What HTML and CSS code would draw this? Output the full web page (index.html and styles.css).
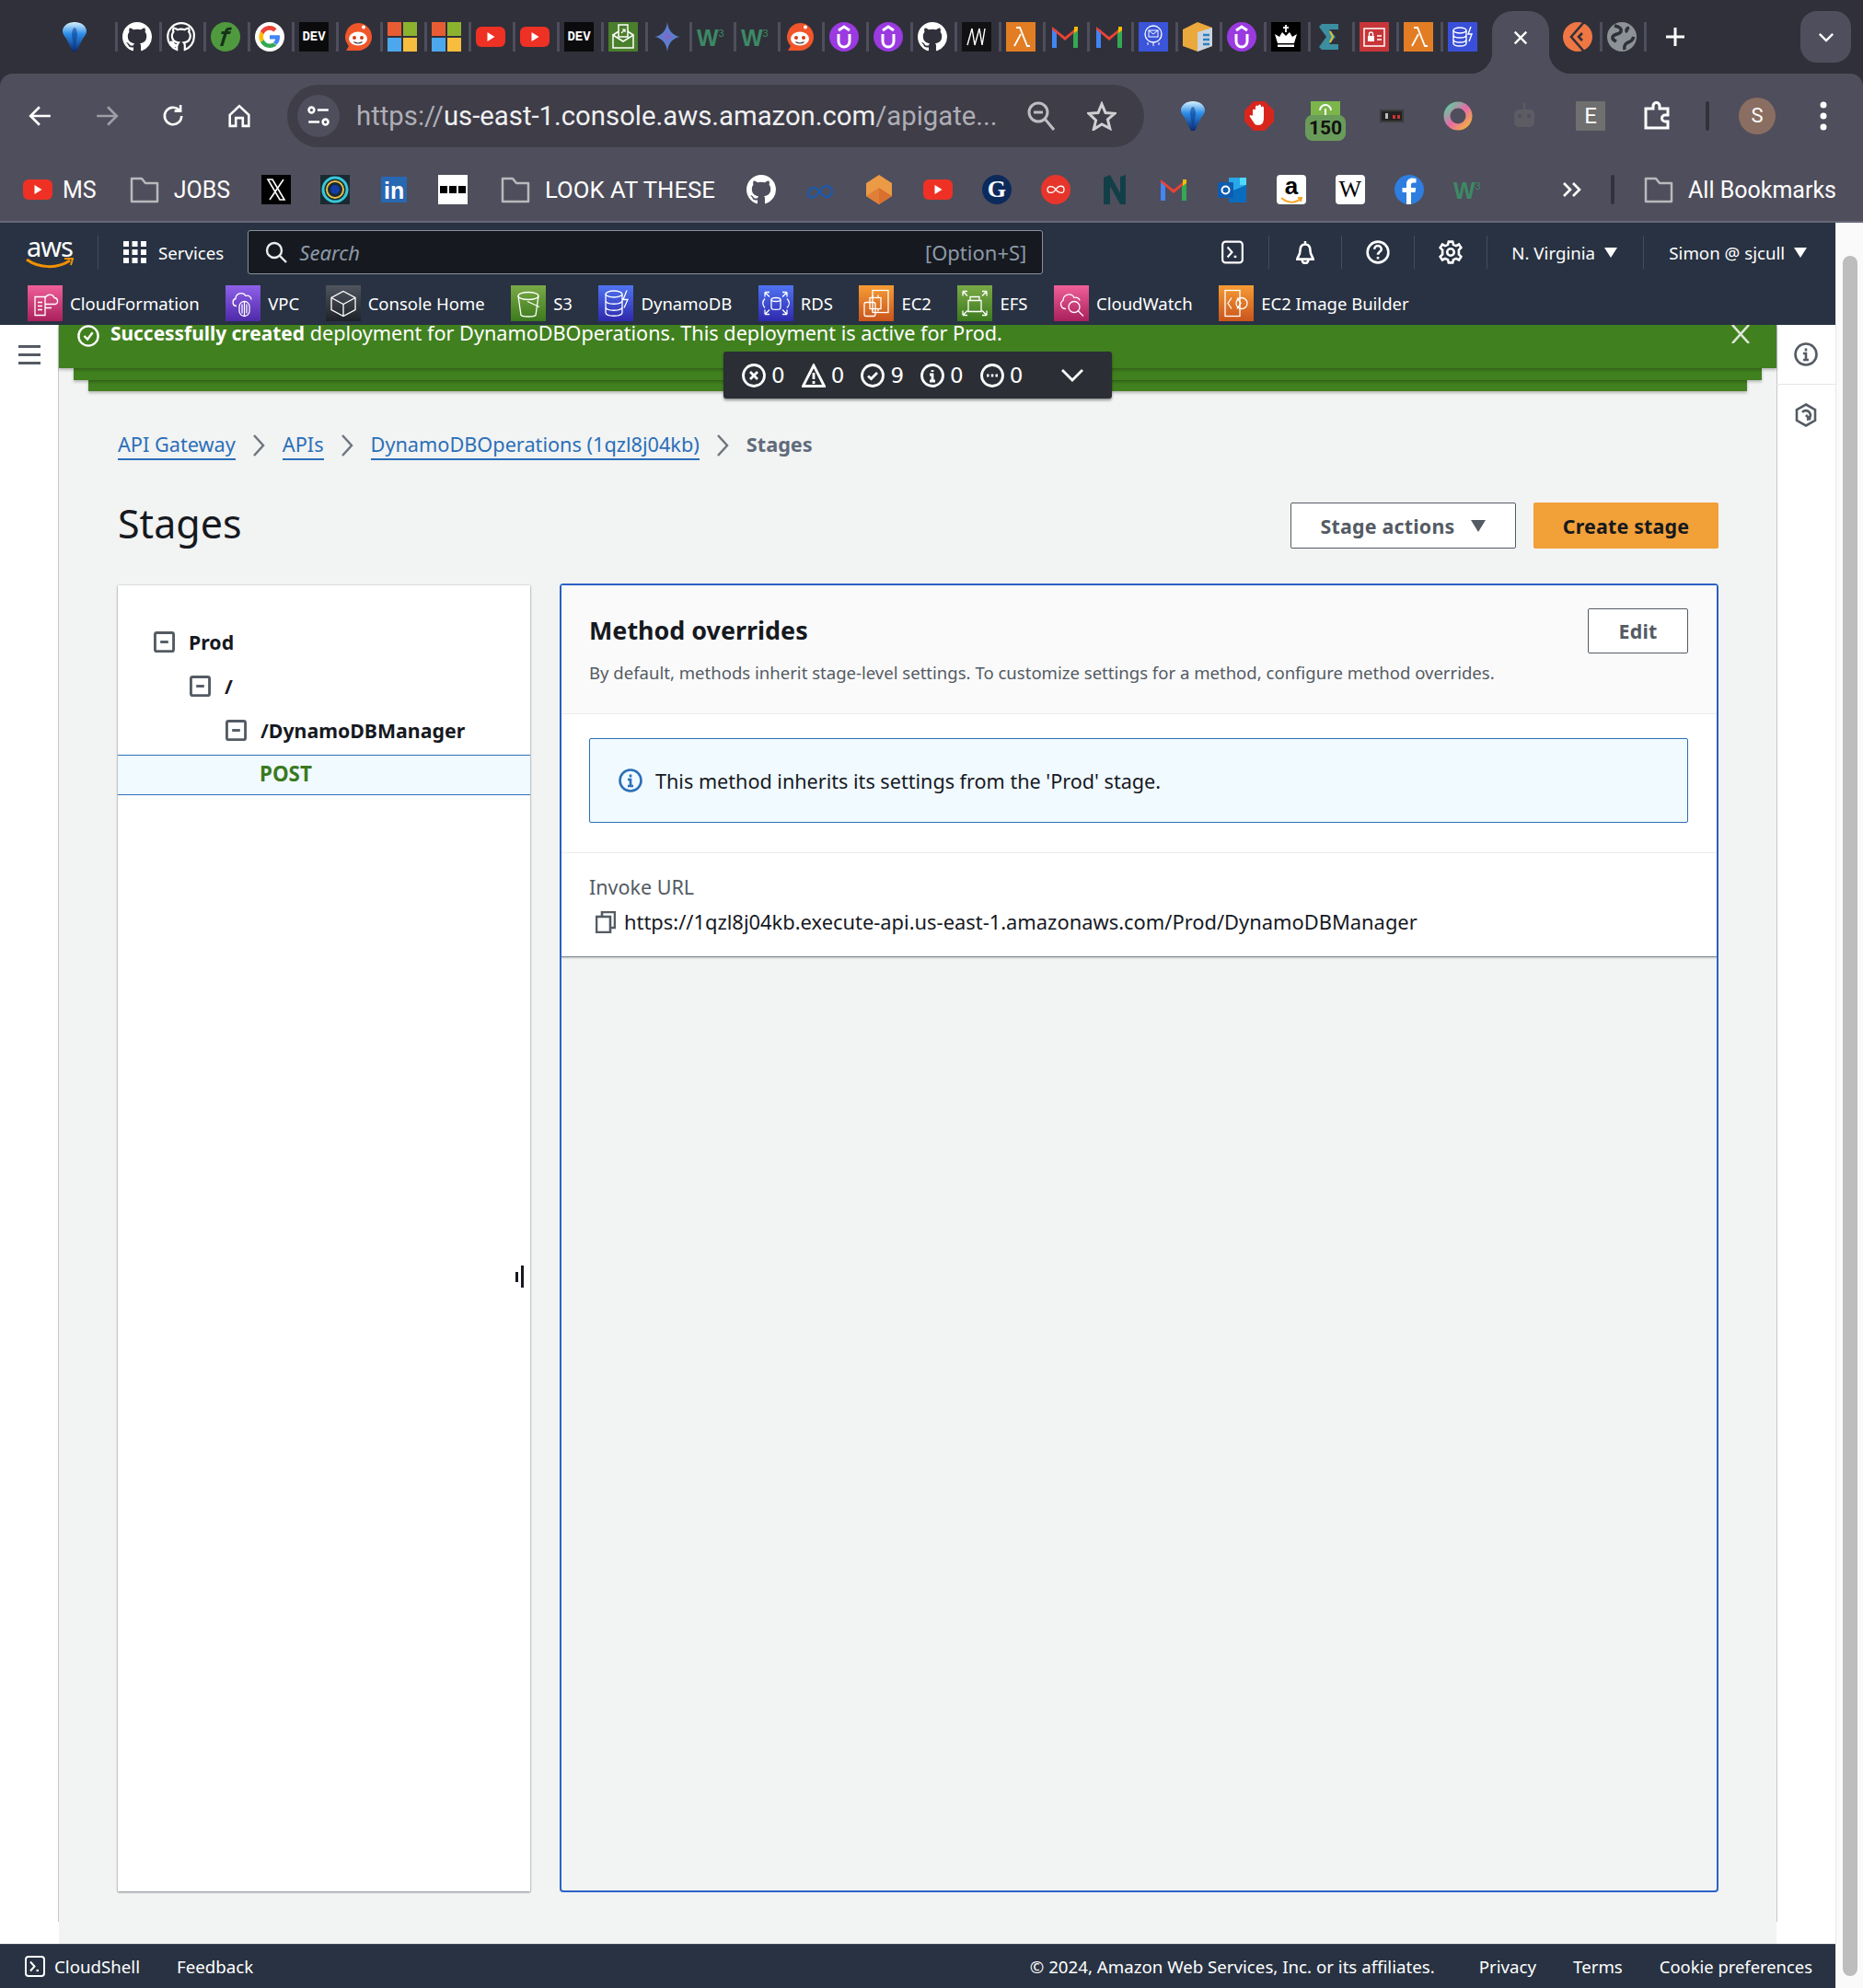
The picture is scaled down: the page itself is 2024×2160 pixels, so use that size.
FILE: index.html
```html
<!DOCTYPE html>
<html lang="en">
<head>
    <meta charset="UTF-8">
    <meta name="viewport" content="width=device-width, initial-scale=1.0">
    <title>Stages - API Gateway</title>
    <link rel="stylesheet" href="styles.css">
</head>
<body>
    <!-- Shared favicons -->
    <svg class="sprite" xmlns="http://www.w3.org/2000/svg">
        <defs>
            <linearGradient id="balloonFill" x1="0" y1="0" x2="0" y2="1">
                <stop offset="0" stop-color="#d8f2ff"/><stop offset="0.4" stop-color="#2f8fe8"/><stop offset="1" stop-color="#0a2a70"/>
            </linearGradient>
            <linearGradient id="ringFill" x1="0" y1="0" x2="1" y2="1">
                <stop offset="0" stop-color="#58d0a0"/><stop offset="0.5" stop-color="#e86aa8"/><stop offset="1" stop-color="#f2b33c"/>
            </linearGradient>
        </defs>
        <symbol id="i-balloon" viewBox="0 0 32 32"><path d="M16 0c7 0 13 4 13 10 0 3-2 5-4 8l-7 14h-4L7 18c-2-3-4-5-4-8C3 4 9 0 16 0z" fill="url(#balloonFill)"/><path d="M16 6c2 0 3 5 3 8l-3 18-3-18c0-3 1-8 3-8z" fill="#0a3a90" opacity="0.55"/></symbol>
        <symbol id="i-github" viewBox="0 0 16 16"><path fill="#fff" d="M8 0C3.58 0 0 3.58 0 8c0 3.54 2.29 6.53 5.47 7.59.4.07.55-.17.55-.38 0-.19-.01-.82-.01-1.49-2.01.37-2.53-.49-2.69-.94-.09-.23-.48-.94-.82-1.13-.28-.15-.68-.52-.01-.53.63-.01 1.08.58 1.23.82.72 1.21 1.87.87 2.33.66.07-.52.28-.87.51-1.07-1.78-.2-3.64-.89-3.64-3.95 0-.87.31-1.59.82-2.15-.08-.2-.36-1.02.08-2.12 0 0 .67-.21 2.2.82.64-.18 1.32-.27 2-.27.68 0 1.36.09 2 .27 1.53-1.04 2.2-.82 2.2-.82.44 1.1.16 1.92.08 2.12.51.56.82 1.27.82 2.15 0 3.07-1.87 3.75-3.65 3.95.29.25.54.73.54 1.48 0 1.07-.01 1.93-.01 2.2 0 .21.15.46.55.38A8.013 8.013 0 0016 8c0-4.42-3.58-8-8-8z"/></symbol>
        <symbol id="i-github-line" viewBox="0 0 16 16"><path fill="none" stroke="#fff" stroke-width="1.1" d="M8 .6C3.9.6.6 3.9.6 8c0 3.2 2.1 6 5 7v-2c-2 .4-2.6-.7-2.8-1.2-.2-.4-.9-1-.2-1 .7 0 1.1.7 1.3 1 .7 1.1 1.7.8 2 .6.1-.6.3-1 .5-1.2-1.7-.2-3.5-.9-3.5-3.8 0-.8.3-1.5.8-2.1-.1-.2-.4-1 .1-2 0 0 .6-.2 2.1.8a7.3 7.3 0 014 0c1.5-1 2.1-.8 2.1-.8.5 1 .2 1.8.1 2 .5.6.8 1.3.8 2.1 0 2.9-1.8 3.6-3.5 3.8.3.3.5.7.5 1.4V15c2.9-1 5-3.8 5-7C15.400 3.900 12.100.6 8 .6z"/></symbol>
        <symbol id="i-green" viewBox="0 0 32 32"><circle cx="16" cy="16" r="16" fill="#4f9a3e"/><path d="M10 26l4-13h-3l1-3h3c1-4 4-5 8-4l-1 3c-2-.4-3 0-3.500 1H22l-1 3h-3.500l-4 13z" fill="#16331a"/></symbol>
        <symbol id="i-google" viewBox="0 0 32 32"><circle cx="16" cy="16" r="16" fill="#fff"/><path d="M27 16.500c0-.9-.1-1.600-.2-2.300H16v4.300h6.200c-.3 1.500-1.100 2.700-2.300 3.500l3.600 2.800c2.200-2 3.500-5 3.500-8.300z" fill="#4285f4"/><path d="M16 28c3 0 5.500-1 7.500-2.700l-3.600-2.800c-1 .7-2.300 1.100-3.900 1.100-3 0-5.500-2-6.400-4.700l-3.700 2.900C7.800 25.500 11.600 28 16 28z" fill="#34a853"/><path d="M9.600 18.900a7 7 0 010-5.800L5.900 10.200a12 12 0 000 11.600z" fill="#fbbc05"/><path d="M16 8.800c1.700 0 3.100.6 4.300 1.700l3.200-3.200C21.500 5.200 19 4 16 4 11.600 4 7.800 6.500 5.900 10.200l3.700 2.900C10.500 10.500 13 8.800 16 8.800z" fill="#ea4335"/></symbol>
        <symbol id="i-reddit" viewBox="0 0 32 32"><path d="M16 1a15 15 0 0115 15c0 8-6.500 15-15 15H3l3-5a15 15 0 0110-25z" fill="#f0562a"/><ellipse cx="16" cy="18" rx="10" ry="7.500" fill="#fff"/><circle cx="12" cy="17" r="2" fill="#d93a14"/><circle cx="20" cy="17" r="2" fill="#d93a14"/><path d="M11.500 21.500c3 2 6 2 9 0" fill="none" stroke="#333" stroke-width="1.200"/><circle cx="22" cy="5.500" r="2" fill="#fff"/></symbol>
        <symbol id="i-ms" viewBox="0 0 32 32"><rect width="15" height="15" fill="#e85c33"/><rect x="17" width="15" height="15" fill="#8cb32f"/><rect y="17" width="15" height="15" fill="#4ca7ec"/><rect x="17" y="17" width="15" height="15" fill="#f7bd3e"/></symbol>
        <symbol id="i-yt" viewBox="0 0 32 32"><rect y="5" width="32" height="22" rx="6" fill="#ee3124"/><path d="M12.500 11l8 5-8 5z" fill="#fff"/></symbol>
        <symbol id="i-mail" viewBox="0 0 32 32"><rect width="32" height="32" fill="#4a7f2b"/><path d="M5 14l11 7 11-7v14H5zM5 14l11-7 11 7" fill="none" stroke="#fff" stroke-width="1.500"/><rect x="11" y="3" width="10" height="13" fill="#4a7f2b" stroke="#fff" stroke-width="1.500"/><path d="M14 12l4-4m-3 0h3v3" fill="none" stroke="#fff" stroke-width="1.200"/></symbol>
        <symbol id="i-gemini" viewBox="0 0 32 32"><path d="M16 0c1 9 6 15 14 16-8 1-13 7-14 16-1-9-6-15-14-16 8-1 13-7 14-16z" fill="#5a7fd0"/><path d="M16 8c.6 4 3 7 7 8-4 1-6.400 4-7 8-.6-4-3-7-7-8 4-1 6.400-4 7-8z" fill="#7a6cc8"/></symbol>
        <symbol id="i-udemy" viewBox="0 0 32 32"><circle cx="16" cy="16" r="16" fill="#9a3ae0"/><path d="M10 13v8a6 6 0 0012 0v-8" fill="none" stroke="#fff" stroke-width="3"/><path d="M10 9l6-4 6 4" fill="none" stroke="#fff" stroke-width="3"/></symbol>
        <symbol id="i-mm" viewBox="0 0 32 32"><rect width="32" height="32" fill="#111113"/><path d="M6 25L11 7l3 18 5-18 3 18 3-18" fill="none" stroke="#fff" stroke-width="1.400"/></symbol>
        <symbol id="i-lambda" viewBox="0 0 32 32"><rect width="32" height="32" fill="#e27d24"/><path d="M11 6h4l8 20h3M16 13L9 26" fill="none" stroke="#fff" stroke-width="1.800"/></symbol>
        <symbol id="i-gmail" viewBox="0 0 32 32"><path d="M2 8h5v20H2z" fill="#4285f4"/><path d="M25 8h5v20h-5z" fill="#34a853"/><path d="M2 8l14 12L30 8v-3L16 16 2 5z" fill="#ea4335"/><path d="M26 5h4v4l-4 3z" fill="#fbbc05"/></symbol>
        <symbol id="i-blue" viewBox="0 0 32 32"><rect width="32" height="32" fill="#3a55d9"/><circle cx="16" cy="13" r="9" fill="none" stroke="#fff" stroke-width="1.300"/><rect x="11" y="9" width="10" height="7" fill="none" stroke="#fff"/><path d="M11 9l5 4 5-4M10 22v3m6-3v4m6-4v3" fill="none" stroke="#fff"/></symbol>
        <symbol id="i-box" viewBox="0 0 32 32"><path d="M0 8l16-8 16 6v20l-16 6-16-6z" fill="#eba93d"/><path d="M16 11l16-5v20l-16 6z" fill="#c9d4e0"/><path d="M22 14h7M22 19h7M22 24h7" stroke="#2a7fc0" stroke-width="2.500"/></symbol>
        <symbol id="i-crown" viewBox="0 0 32 32"><rect width="32" height="32" fill="#000"/><path d="M7 23L4 13l5 3 3-5 4 4 4-4 3 5 5-3-3 10z" fill="#fff"/><path d="M16 3v8M13 6h6" stroke="#fff" stroke-width="1.800"/><rect x="7" y="24.500" width="18" height="2.500" fill="#fff"/></symbol>
        <symbol id="i-sigma" viewBox="0 0 32 32"><path d="M7 2h18v6H15l7 8-7 8h10v6H7l-3-3 8-11-8-11z" fill="#3b8ea0"/><path d="M16 10l3 6-3 6" fill="none" stroke="#e0c030" stroke-width="2"/></symbol>
        <symbol id="i-redcard" viewBox="0 0 32 32"><rect width="32" height="32" fill="#c83538"/><rect x="5" y="7" width="22" height="19" fill="none" stroke="#fff" stroke-width="1.500"/><rect x="9" y="15" width="7" height="6" fill="#fff"/><path d="M19 15h5M19 19h5M10.500 15v-2a2 2 0 014 0v2" fill="none" stroke="#fff" stroke-width="1.300"/></symbol>
        <symbol id="i-dynamo" viewBox="0 0 32 32"><rect width="32" height="32" fill="#3a4fd9"/><ellipse cx="13" cy="9" rx="7" ry="3" fill="none" stroke="#fff" stroke-width="1.400"/><path d="M6 9v14c0 4 14 4 14 0V9M6 14c0 4 14 4 14 0M6 19c0 4 14 4 14 0M25 5l-3 8h4l-3 8" fill="none" stroke="#fff" stroke-width="1.400"/></symbol>
        <symbol id="i-gitlab" viewBox="0 0 32 32"><circle cx="16" cy="16" r="16" fill="#ee7744"/><path d="M23 0L9 16l14 16" fill="none" stroke="#30303a" stroke-width="2.500"/><path d="M21 12l-4 4 4 4" fill="none" stroke="#30303a" stroke-width="2.500"/></symbol>
        <symbol id="i-globe" viewBox="0 0 32 32"><circle cx="16" cy="16" r="16" fill="#8d9296"/><path d="M8 4c5 1 8 3 7 6-1 4-7 2-9 6-1 3 2 4 4 5M19 30c-1-4 1-7 4-8 3-1 5-3 6-6M24 6c-3 1-4 3-2 5" fill="none" stroke="#30303a" stroke-width="3.500"/></symbol>
        <symbol id="i-folder" viewBox="0 0 32 32"><path d="M2 4h11l4 5h13v20H2z" fill="none" stroke="#b9b9bd" stroke-width="2.500" stroke-linejoin="round"/></symbol>
        <symbol id="i-shell" viewBox="0 0 24 24"><rect x="2" y="1.500" width="20" height="21" rx="3" fill="none" stroke="#fff" stroke-width="2"/><path d="M7 7l4.500 5L7 17" fill="none" stroke="#fff" stroke-width="2"/><path d="M13.500 16.500h2.500" stroke="#fff" stroke-width="2.200"/></symbol>
        <symbol id="i-minus" viewBox="0 0 24 24"><rect x="1.500" y="1.500" width="21" height="21" rx="2" fill="none" stroke="#545b64" stroke-width="3"/><path d="M7.500 12h9" stroke="#545b64" stroke-width="3"/></symbol>
    </svg>

    <!-- Browser chrome -->
    <div class="browser">
        <div class="tab-strip">
            <div class="pinned"><svg class="fav"><use href="#i-balloon"/></svg></div>
            <div class="tab"><svg class="fav"><use href="#i-github"/></svg></div>
            <div class="tab"><svg class="fav"><use href="#i-github-line"/></svg></div>
            <div class="tab"><svg class="fav"><use href="#i-green"/></svg></div>
            <div class="tab"><svg class="fav"><use href="#i-google"/></svg></div>
            <div class="tab"><span class="fav-dev">DEV</span></div>
            <div class="tab"><svg class="fav"><use href="#i-reddit"/></svg></div>
            <div class="tab"><svg class="fav"><use href="#i-ms"/></svg></div>
            <div class="tab"><svg class="fav"><use href="#i-ms"/></svg></div>
            <div class="tab"><svg class="fav"><use href="#i-yt"/></svg></div>
            <div class="tab"><svg class="fav"><use href="#i-yt"/></svg></div>
            <div class="tab"><span class="fav-dev">DEV</span></div>
            <div class="tab"><svg class="fav"><use href="#i-mail"/></svg></div>
            <div class="tab"><svg class="fav"><use href="#i-gemini"/></svg></div>
            <div class="tab"><span class="fav-w3">W<sup>3</sup></span></div>
            <div class="tab"><span class="fav-w3">W<sup>3</sup></span></div>
            <div class="tab"><svg class="fav"><use href="#i-reddit"/></svg></div>
            <div class="tab"><svg class="fav"><use href="#i-udemy"/></svg></div>
            <div class="tab"><svg class="fav"><use href="#i-udemy"/></svg></div>
            <div class="tab"><svg class="fav"><use href="#i-github"/></svg></div>
            <div class="tab"><svg class="fav"><use href="#i-mm"/></svg></div>
            <div class="tab"><svg class="fav"><use href="#i-lambda"/></svg></div>
            <div class="tab"><svg class="fav"><use href="#i-gmail"/></svg></div>
            <div class="tab"><svg class="fav"><use href="#i-gmail"/></svg></div>
            <div class="tab"><svg class="fav"><use href="#i-blue"/></svg></div>
            <div class="tab"><svg class="fav"><use href="#i-box"/></svg></div>
            <div class="tab"><svg class="fav"><use href="#i-udemy"/></svg></div>
            <div class="tab"><svg class="fav"><use href="#i-crown"/></svg></div>
            <div class="tab"><svg class="fav"><use href="#i-sigma"/></svg></div>
            <div class="tab"><svg class="fav"><use href="#i-redcard"/></svg></div>
            <div class="tab"><svg class="fav"><use href="#i-lambda"/></svg></div>
            <div class="tab"><svg class="fav"><use href="#i-dynamo"/></svg></div>
            <div class="tab-active">
                <svg class="tab-close" viewBox="0 0 20 20"><path d="M3 3l14 14M17 3L3 17"/></svg>
            </div>
            <div class="tab tab-after"><svg class="fav"><use href="#i-gitlab"/></svg></div>
            <div class="tab"><svg class="fav"><use href="#i-globe"/></svg></div>
            <div class="tab tab-plus">
                <svg class="tab-new" viewBox="0 0 20 20"><path d="M10 0v20M0 10h20"/></svg>
            </div>
            <div class="tab-menu">
                <svg viewBox="0 0 20 12"><path d="M2 2l8 8 8-8"/></svg>
            </div>
        </div>

        <div class="toolbar">
            <button class="tool-btn"><svg viewBox="0 0 24 24" class="line-icon"><path d="M22 12H3M11 3l-9 9 9 9"/></svg></button>
            <button class="tool-btn dim"><svg viewBox="0 0 24 24" class="line-icon"><path d="M2 12h19M13 3l9 9-9 9"/></svg></button>
            <button class="tool-btn"><svg viewBox="0 0 24 24" class="line-icon"><path d="M20.500 12a8.500 8.500 0 11-2.500-6M19.500 1v6h-6"/></svg></button>
            <button class="tool-btn"><svg viewBox="0 0 24 24" class="line-icon"><path d="M2.500 11L12 2l9.500 9v11h-6v-8h-7v8h-6z"/></svg></button>

            <div class="omnibox">
                <span class="site-btn">
                    <svg viewBox="0 0 24 24" class="line-icon"><circle cx="5" cy="6" r="2.700"/><path d="M11 6h11M2 18h11"/><circle cx="19" cy="18" r="2.700"/></svg>
                </span>
                <span class="url"><span class="url-dim">https://</span>us-east-1.console.aws.amazon.com<span class="url-dim">/apigate...</span></span>
                <svg class="omni-zoom" viewBox="0 0 30 32"><circle cx="12" cy="12" r="10"/><path d="M7 12h10M19 19l10 12"/></svg>
                <svg class="omni-star" viewBox="0 0 32 32"><path d="M16 3l4 9.500 10 .8-7.600 6.500 2.400 9.700L16 25l-8.800 5.500 2.400-9.700L2 13.300l10-.8z"/></svg>
            </div>

            <div class="extensions">
                <span class="ext"><svg class="ext-32"><use href="#i-balloon"/></svg></span>
                <span class="ext"><svg class="ext-32" viewBox="0 0 32 32"><path d="M10 0h12l10 10v12L22 32H10L0 22V10z" fill="#d8261c"/><path d="M9 15v-5a1.500 1.500 0 013 0V6a1.500 1.500 0 013 0v-1a1.500 1.500 0 013 0v2a1.500 1.500 0 013 0v11c0 5-2 8-6 8-3 0-4-1-5-3l-4-6c-1-2 1-3 2-1z" fill="#fff"/></svg></span>
                <span class="ext ext-badged">
                    <svg class="ext-top" viewBox="0 0 32 16"><rect width="32" height="16" fill="#7cb64a"/><path d="M10 10a6 6 0 1112 0M16 8v8" fill="none" stroke="#fff" stroke-width="2"/></svg>
                    <span class="ext-badge">150</span>
                </span>
                <span class="ext"><svg class="ext-nes" viewBox="0 0 26 14"><rect width="26" height="14" fill="#222"/><rect x="1" y="1" width="24" height="12" fill="none" stroke="#555"/><rect x="6" y="4" width="3" height="6" fill="#bbb"/><rect x="14" y="6" width="3" height="4" fill="#c33"/><rect x="19" y="6" width="3" height="4" fill="#c33"/></svg></span>
                <span class="ext"><svg class="ext-32" viewBox="0 0 32 32"><circle cx="16" cy="16" r="12" fill="none" stroke="url(#ringFill)" stroke-width="7"/></svg></span>
                <span class="ext"><svg class="ext-32" viewBox="0 0 32 32"><rect x="5" y="9" width="22" height="19" rx="5" fill="#5d5c63"/><path d="M16 9V2" stroke="#5d5c63" stroke-width="2"/><circle cx="11" cy="16" r="2" fill="#4f4e5c"/><circle cx="21" cy="16" r="2" fill="#4f4e5c"/></svg></span>
                <span class="ext"><span class="ext-e">E</span></span>
                <span class="ext"><svg class="ext-puzzle" viewBox="0 0 32 32"><path d="M12 8V5a3.500 3.500 0 017 0v3h9v7h-3a3.500 3.500 0 000 7h3v7H4V8z"/></svg></span>
            </div>
            <span class="tool-sep"></span>
            <span class="avatar">S</span>
            <svg class="kebab" viewBox="0 0 8 32"><circle cx="4" cy="4" r="3.500"/><circle cx="4" cy="16" r="3.500"/><circle cx="4" cy="28" r="3.500"/></svg>
        </div>

        <div class="bookmarks">
            <a class="bm bm-ms"><svg class="fav"><use href="#i-yt"/></svg>MS</a>
            <a class="bm bm-folder"><svg class="fav"><use href="#i-folder"/></svg>JOBS</a>
            <a class="bm"><svg class="fav" viewBox="0 0 32 32"><rect width="32" height="32" fill="#000"/><path d="M7 5h5l13 22h-5zM24 5L9 27" fill="none" stroke="#fff" stroke-width="1.600"/></svg></a>
            <a class="bm"><svg class="fav" viewBox="0 0 32 32"><rect width="32" height="32" fill="#1a2a33"/><circle cx="16" cy="16" r="13" fill="none" stroke="#38c8d8" stroke-width="3"/><circle cx="16" cy="16" r="9" fill="none" stroke="#e8c040" stroke-width="2"/><circle cx="16" cy="16" r="5" fill="#123ca8"/></svg></a>
            <a class="bm"><span class="bm-in">in</span></a>
            <a class="bm"><svg class="fav" viewBox="0 0 32 32"><rect width="32" height="32" fill="#fff"/><rect x="2" y="12" width="8" height="8" fill="#000"/><rect x="12" y="12" width="8" height="8" fill="#000"/><rect x="22" y="12" width="8" height="8" fill="#000"/></svg></a>
            <a class="bm bm-folder bm-look"><svg class="fav"><use href="#i-folder"/></svg>LOOK AT THESE</a>
            <a class="bm"><svg class="fav"><use href="#i-github"/></svg></a>
            <a class="bm"><svg class="fav" viewBox="0 0 32 32"><path d="M3 20a6 6 0 016-6c3 0 5 3 7 5s4 5 7 5a6 6 0 000-12c-3 0-5 3-7 5s-4 7-7 7a4 4 0 01-6-4z" fill="none" stroke="#1e5aa8" stroke-width="2.500"/></svg></a>
            <a class="bm"><svg class="fav" viewBox="0 0 32 32"><path d="M16 0l14 9v14l-14 9-14-9V9z" fill="#eb9b45"/><path d="M16 14l14 9-14 9z" fill="#d9702f"/><path d="M16 14L2 23l14 9z" fill="#e07f38"/></svg></a>
            <a class="bm"><svg class="fav"><use href="#i-yt"/></svg></a>
            <a class="bm"><span class="bm-guardian">G</span></a>
            <a class="bm"><svg class="fav" viewBox="0 0 32 32"><circle cx="16" cy="16" r="16" fill="#e8352b"/><path d="M16 16c-3-5-9-4-9 0s6 5 9 0 9-5 9 0-6 4-9 0" fill="none" stroke="#fff" stroke-width="1.300"/></svg></a>
            <a class="bm"><svg class="fav" viewBox="0 0 32 32"><path d="M4 32V3l7-3 11 20V2l6-2v32h-6L11 12v20z" fill="#123f47"/></svg></a>
            <a class="bm"><svg class="fav"><use href="#i-gmail"/></svg></a>
            <a class="bm"><svg class="fav" viewBox="0 0 32 32"><path d="M12 3h12v8h7v19H12z" fill="#28a8ea"/><path d="M24 3h7v8h-7z" fill="#50d9ff"/><path d="M12 19l19-8v19H12z" fill="#0a6cbd"/><rect y="8" width="17" height="17" rx="1" fill="#0f5cb0"/><circle cx="8.500" cy="16.500" r="4" fill="none" stroke="#fff" stroke-width="2"/></svg></a>
            <a class="bm"><span class="bm-tile bm-amazon">a<svg viewBox="0 0 24 8"><path d="M1 1c7 6 15 6 21 1M19 1l4 0-1 4" fill="none" stroke="#f5a623" stroke-width="2"/></svg></span></a>
            <a class="bm"><span class="bm-tile bm-wiki">W</span></a>
            <a class="bm"><svg class="fav" viewBox="0 0 32 32"><circle cx="16" cy="16" r="16" fill="#2d7ee0"/><path d="M18 32V19h4.500l.8-5H18v-3c0-1.500.6-2.500 2.700-2.500h2.800V4c-1-.2-2.500-.4-4-.4-4 0-6.500 2.400-6.500 6.600V14H8.500v5H13v13z" fill="#fff"/></svg></a>
            <a class="bm"><span class="fav-w3">W<sup>3</sup></span></a>
            <div class="bm-end">
                <svg class="bm-more" viewBox="0 0 22 18"><path d="M2 2l7 7-7 7M12 2l7 7-7 7"/></svg>
                <span class="bm-sep"></span>
                <a class="bm bm-folder"><svg class="fav"><use href="#i-folder"/></svg>All Bookmarks</a>
            </div>
        </div>
    </div>

    <div class="window">
        <div class="console">
            <!-- AWS header -->
            <header class="aws-header">
                <div class="aws-top">
                    <div class="aws-logo">
                        <span>aws</span>
                        <svg viewBox="0 0 52 12"><path d="M1 2c14 10 34 10 47 1" fill="none" stroke="#f29100" stroke-width="3"/><path d="M42 1h9l-2 7" fill="none" stroke="#f29100" stroke-width="2"/></svg>
                    </div>
                    <span class="services"><svg viewBox="0 0 25 24"><rect width="6" height="6"/><rect x="9.500" width="6" height="6"/><rect x="19" width="6" height="6"/><rect y="9" width="6" height="6"/><rect x="9.500" y="9" width="6" height="6"/><rect x="19" y="9" width="6" height="6"/><rect y="18" width="6" height="6"/><rect x="9.500" y="18" width="6" height="6"/><rect x="19" y="18" width="6" height="6"/></svg>Services</span>
                    <div class="search-box">
                        <svg viewBox="0 0 24 24"><circle cx="10" cy="10" r="8"/><path d="M16 16l7 7"/></svg>
                        <span class="search-label">Search</span>
                        <span class="search-key">[Option+S]</span>
                    </div>
                    <div class="aws-actions">
                        <span class="aws-action"><svg><use href="#i-shell"/></svg></span>
                        <span class="aws-action"><svg viewBox="0 0 24 24" class="line-icon"><path d="M12 1v3M12 4c-4 0-5 3-5 6 0 5-3 7-3 9h16c0-2-3-4-3-9 0-3-1-6-5-6zM9 20a3 3 0 006 0"/></svg></span>
                        <span class="aws-action"><svg viewBox="0 0 24 24" class="line-icon"><circle cx="12" cy="12" r="10.500"/><path d="M8.500 9a3.500 3.500 0 117 0c0 2.500-3.500 2.500-3.500 5.500M12 16.500v2.500"/></svg></span>
                        <span class="aws-action"><svg viewBox="0 0 24 24" class="line-icon"><circle cx="12" cy="12" r="3.500"/><path d="M10 1.500h4l.8 3 2.700 1.200 2.800-1.500 2.200 3.300-2.300 2.200v4.600l2.300 2.200-2.200 3.300-2.800-1.500-2.700 1.200-.8 3h-4l-.8-3-2.700-1.200-2.800 1.500-2.200-3.300 2.300-2.200V9.700L1.500 7.500l2.200-3.300 2.800 1.500 2.700-1.200z"/></svg></span>
                        <span class="aws-menu aws-region">N. Virginia<i class="caret"></i></span>
                        <span class="aws-menu aws-user">Simon @ sjcull<i class="caret"></i></span>
                    </div>
                </div>
                <div class="aws-fav">
                    <span class="svc"><span class="svc-icon pink"><svg viewBox="0 0 38 38"><path d="M8 12h11v20H8zM11 18h5M11 22h5M11 26h5M19 14c1-5 8-6 10-1 4 0 5 6 1 7H19M19 24h7"/></svg></span>CloudFormation</span>
                    <span class="svc"><span class="svc-icon purple"><svg viewBox="0 0 38 38"><path d="M12 22c-5 0-5-7-1-8 0-6 8-8 11-3 3-1 6 1 6 4"/><rect x="15" y="17" width="11" height="16" rx="5.500"/><path d="M20.500 17v16M18 20v10M23 20v10"/></svg></span>VPC</span>
                    <span class="svc"><span class="svc-icon slate"><svg viewBox="0 0 38 38"><path d="M19 6l13 7v13l-13 7-13-7V13zM6 13l13 7 13-7M19 20v13"/></svg></span>Console Home</span>
                    <span class="svc"><span class="svc-icon green"><svg viewBox="0 0 38 38"><ellipse cx="19" cy="11" rx="11" ry="4"/><path d="M8 11l3 21c2 2 14 2 16 0l3-21M18 17l13 6"/></svg></span>S3</span>
                    <span class="svc"><span class="svc-icon blue"><svg viewBox="0 0 38 38"><ellipse cx="17" cy="9" rx="9" ry="3.500"/><path d="M8 9v20c0 5 18 5 18 0V9M8 16c0 5 18 5 18 0M8 23c0 5 18 5 18 0M31 5l-4 10h5l-4 9"/></svg></span>DynamoDB</span>
                    <span class="svc"><span class="svc-icon blue"><svg viewBox="0 0 38 38"><ellipse cx="19" cy="15" rx="5" ry="2"/><path d="M14 15v9c0 2.500 10 2.500 10 0v-9M7 14c-3 3-3 7 0 10M31 14c3 3 3 7 0 10M7 7l5 5M7 7v5M7 7h5M31 7l-5 5M31 7v5M31 7h-5M7 31l5-5M7 31v-5M7 31h5M31 31l-5-5M31 31v-5M31 31h-5"/></svg></span>RDS</span>
                    <span class="svc"><span class="svc-icon orange"><svg viewBox="0 0 38 38"><rect x="15" y="5" width="17" height="24"/><rect x="6" y="18" width="12" height="15" rx="2"/><rect x="12" y="13" width="12" height="12"/><path d="M15 10v3M21 10v3M15 25v3M21 25v3"/></svg></span>EC2</span>
                    <span class="svc"><span class="svc-icon green"><svg viewBox="0 0 38 38"><path d="M12 16h14v12H12zM14 16v-4h10v4M6 6l5 5M6 6v5M6 6h5M32 6l-5 5M32 6v5M32 6h-5M6 32l5-5M6 32v-5M6 32h5M32 32l-5-5M32 32v-5M32 32h-5"/></svg></span>EFS</span>
                    <span class="svc"><span class="svc-icon pink"><svg viewBox="0 0 38 38"><path d="M13 25c-6 0-7-7-3-9 0-7 9-9 12-3 3-1 6 1 6 3"/><circle cx="22" cy="23" r="6"/><path d="M26 27l6 6"/></svg></span>CloudWatch</span>
                    <span class="svc"><span class="svc-icon orange"><svg viewBox="0 0 38 38"><rect x="7" y="5" width="16" height="28"/><path d="M14 13l-4 6 4 6M20 13l4 6-4 6"/><circle cx="25" cy="19" r="6"/></svg></span>EC2 Image Builder</span>
                </div>
            </header>

            <div class="page">
                <aside class="side-left">
                    <span class="ham"></span>
                </aside>

                <main class="content">
                    <div class="flash">
                        <svg class="flash-check" viewBox="0 0 26 26"><circle cx="13" cy="13" r="11.500"/><path d="M8 13l4 4 6-8"/></svg>
                        <p><b>Successfully created</b> deployment for DynamoDBOperations. This deployment is active for Prod.</p>
                        <svg class="flash-close" viewBox="0 0 20 20"><path d="M1 0l18 20M19 0L1 20"/></svg>
                    </div>
                    <div class="flash-layer one"></div>
                    <div class="flash-layer two"></div>

                    <div class="axe-bar">
                        <svg viewBox="0 0 26 26"><circle cx="13" cy="13" r="11.500"/><path d="M9 9l8 8M17 9l-8 8"/></svg><span>0</span>
                        <svg viewBox="0 0 26 26"><path d="M13 2L1.500 24.500h23zM13 10v7M13 19v3"/></svg><span>0</span>
                        <svg viewBox="0 0 26 26"><circle cx="13" cy="13" r="11.500"/><path d="M8 13.500l3.500 3L18 10"/></svg><span>9</span>
                        <svg viewBox="0 0 26 26"><circle cx="13" cy="13" r="11.500"/><path d="M13 7v2M10 12h3v7M10 19h6"/></svg><span>0</span>
                        <svg viewBox="0 0 26 26"><circle cx="13" cy="13" r="11.500"/><path d="M7 13h2.500M11.800 13h2.500M16.500 13h2.500"/></svg><span>0</span>
                        <svg class="axe-chevron" viewBox="0 0 26 16"><path d="M2 2l11 11L24 2"/></svg>
                    </div>

                    <div class="stage-page">
                        <nav class="crumbs">
                            <a>API Gateway</a>
                            <svg viewBox="0 0 14 26"><path d="M2 2l10 11L2 24"/></svg>
                            <a>APIs</a>
                            <svg viewBox="0 0 14 26"><path d="M2 2l10 11L2 24"/></svg>
                            <a>DynamoDBOperations (1qzl8j04kb)</a>
                            <svg viewBox="0 0 14 26"><path d="M2 2l10 11L2 24"/></svg>
                            <span>Stages</span>
                        </nav>

                        <div class="title-row">
                            <h1>Stages</h1>
                            <div class="title-btns">
                                <button class="btn btn-normal btn-actions">Stage actions<i class="caret-lg"></i></button>
                                <button class="btn btn-primary">Create stage</button>
                            </div>
                        </div>

                        <div class="split">
                            <div class="tree">
                                <div class="tree-row lvl-0"><svg><use href="#i-minus"/></svg>Prod</div>
                                <div class="tree-row lvl-1"><svg><use href="#i-minus"/></svg>/</div>
                                <div class="tree-row lvl-2"><svg><use href="#i-minus"/></svg>/DynamoDBManager</div>
                                <div class="tree-post">POST</div>
                                <span class="resize-cursor"><i></i><i></i></span>
                            </div>

                            <div class="card">
                                <div class="card-inner">
                                    <div class="card-head">
                                        <div class="card-title">
                                            <h2>Method overrides</h2>
                                            <button class="btn btn-normal btn-edit">Edit</button>
                                        </div>
                                        <p>By default, methods inherit stage-level settings. To customize settings for a method, configure method overrides.</p>
                                    </div>
                                    <div class="card-info">
                                        <div class="info-box">
                                            <svg viewBox="0 0 26 26"><circle cx="13" cy="13" r="11.500"/><path d="M13 6.500v3M10 12h3v7M10 19h6"/></svg>
                                            This method inherits its settings from the 'Prod' stage.
                                        </div>
                                    </div>
                                    <div class="card-url">
                                        <div class="url-label">Invoke URL</div>
                                        <div class="url-value">
                                            <svg viewBox="0 0 22 24"><path d="M7 5V1h14v17h-5"/><rect x="1" y="6" width="15" height="17"/></svg>
                                            https://1qzl8j04kb.execute-api.us-east-1.amazonaws.com/Prod/DynamoDBManager
                                        </div>
                                    </div>
                                </div>
                            </div>
                        </div>
                    </div>
                </main>

                <aside class="side-right">
                    <div class="side-tool">
                        <svg viewBox="0 0 26 26"><circle cx="13" cy="13" r="11.500"/><path d="M13 6.500v3M10 12h3v7M10 19h6"/></svg>
                    </div>
                    <div class="side-tool">
                        <svg viewBox="0 0 26 26"><path d="M13 1.500l10 5.700v11.600l-10 5.700-10-5.700V7.200zM9 10a5 5 0 115 8M13 13l5 5"/></svg>
                    </div>
                </aside>
            </div>

            <footer class="aws-footer">
                <div class="foot-left">
                    <span class="foot-shell"><svg><use href="#i-shell"/></svg>CloudShell</span>
                    <span>Feedback</span>
                </div>
                <div class="foot-right">
                    <span class="foot-copy">© 2024, Amazon Web Services, Inc. or its affiliates.</span>
                    <span>Privacy</span>
                    <span>Terms</span>
                    <span class="foot-cookie">Cookie preferences</span>
                </div>
            </footer>
        </div>
        <div class="scrollbar"><span class="thumb"></span></div>
    </div>
</body>
</html>
```

FILE: styles.css
```css
/* Page */
* {
    box-sizing: border-box;
}
html, body {
    margin: 0;
    height: 2160px;
    overflow: hidden;
}
body {
    width: 2024px;
    display: flex;
    flex-direction: column;
    font-family: 'Noto Sans', 'Open Sans', sans-serif;
    background: #30303a;
}
.sprite {
    position: absolute;
    width: 0;
    height: 0;
}

/* Browser chrome */
.browser {
    height: 242px;
    flex: none;
    font-family: Roboto, 'Liberation Sans', sans-serif;
    color: #fff;
}
.fav {
    width: 32px;
    height: 32px;
    flex: none;
}
.fav-dev {
    width: 32px;
    height: 32px;
    background: #0b0b0d;
    color: #fff;
    font: bold 14px/32px 'Liberation Mono', monospace;
    text-align: center;
}
.fav-w3 {
    width: 32px;
    height: 32px;
    display: block;
    color: #3c8a64;
    font: bold 25px/34px 'Liberation Sans', sans-serif;
    letter-spacing: -1px;
    white-space: nowrap;
}
.fav-w3 sup {
    font: 11px/11px 'Liberation Sans', sans-serif;
    vertical-align: 10px;
    margin-left: 1px;
}
.tab-strip {
    height: 80px;
    display: flex;
    align-items: flex-start;
    padding-left: 57px;
}
.pinned {
    width: 48px;
    margin: 24px 20px 0 0;
    display: flex;
    justify-content: center;
}
.tab {
    width: 48px;
    height: 32px;
    margin-top: 24px;
    display: flex;
    justify-content: center;
    background: linear-gradient(#4f4e5c, #4f4e5c) left / 3px 100% no-repeat;
}
.tab-active {
    width: 62px;
    height: 68px;
    margin: 12px 7px 0 8px;
    background: #4f4e5c;
    border-radius: 22px 22px 0 0;
    position: relative;
    display: flex;
    justify-content: center;
    padding-top: 20px;
}
.tab-active::before,
.tab-active::after {
    content: "";
    position: absolute;
    bottom: 0;
    width: 24px;
    height: 24px;
}
.tab-active::before {
    left: -24px;
    background: radial-gradient(circle at 0 0, transparent 24px, #4f4e5c 24.5px);
}
.tab-active::after {
    right: -24px;
    background: radial-gradient(circle at 100% 0, transparent 24px, #4f4e5c 24.5px);
}
.tab-close {
    width: 18px;
    height: 18px;
    fill: none;
    stroke: #fff;
    stroke-width: 2.6;
}
.tab-after {
    background: none;
}
.tab-plus {
    width: 68px;
    padding-top: 6px;
}
.tab-new {
    width: 20px;
    height: 20px;
    stroke: #fff;
    stroke-width: 3;
}
.tab-menu {
    width: 55px;
    height: 56px;
    margin: 12px 13px 0 auto;
    background: #4f4e5c;
    border-radius: 18px;
    display: flex;
    align-items: center;
    justify-content: center;
}
.tab-menu svg {
    width: 18px;
    height: 11px;
    fill: none;
    stroke: #fff;
    stroke-width: 2.6;
}
.toolbar {
    height: 80px;
    display: flex;
    align-items: flex-start;
    padding: 12px 0 0 8px;
    background: #4f4e5c;
    border-radius: 14px 14px 0 0;
}
.tool-btn {
    width: 72px;
    height: 68px;
    padding: 0;
    border: none;
    background: none;
    display: flex;
    align-items: center;
    justify-content: center;
}
.tool-btn svg {
    width: 26px;
    height: 28px;
}
.tool-btn.dim {
    opacity: 0.45;
}
.line-icon {
    fill: none;
    stroke: #fff;
    stroke-width: 2.4;
}
.omnibox {
    width: 931px;
    height: 68px;
    margin-left: 16px;
    padding-left: 11px;
    border-radius: 34px;
    background: #3e3d48;
    display: flex;
    align-items: center;
}
.site-btn {
    width: 46px;
    height: 46px;
    border-radius: 50%;
    background: #4f4e5c;
    display: flex;
    align-items: center;
    justify-content: center;
}
.site-btn svg {
    width: 26px;
    height: 26px;
}
.url {
    margin-left: 18px;
    width: 724px;
    font-size: 29.3px;
    color: #f0f0f2;
    white-space: nowrap;
}
.url-dim {
    color: #aeaeb5;
}
.omni-zoom {
    width: 30px;
    height: 32px;
    margin-left: 5px;
    fill: none;
    stroke: #bdbdc2;
    stroke-width: 3;
}
.omni-star {
    width: 32px;
    height: 32px;
    margin-left: 35px;
    fill: none;
    stroke: #d0d0d4;
    stroke-width: 3;
}
.extensions {
    margin-left: 17px;
    display: flex;
}
.ext {
    width: 72px;
    height: 68px;
    display: flex;
    align-items: center;
    justify-content: center;
}
.ext-32 {
    width: 32px;
    height: 32px;
}
.ext-badged {
    flex-direction: column;
    justify-content: flex-start;
    padding-top: 18px;
}
.ext-top {
    width: 32px;
    height: 16px;
    flex: none;
}
.ext-badge {
    width: 44px;
    height: 28px;
    flex: none;
    margin-top: -1px;
    border-radius: 8px;
    background: #699c5a;
    color: #111;
    font-size: 21px;
    font-weight: 700;
    text-align: center;
    line-height: 28px;
}
.ext-nes {
    width: 26px;
    height: 14px;
}
.ext-e {
    width: 32px;
    height: 32px;
    background: #6f6f6f;
    font-size: 24px;
    text-align: center;
    line-height: 32px;
}
.ext-puzzle {
    width: 32px;
    height: 34px;
    fill: none;
    stroke: #fff;
    stroke-width: 3;
}
.tool-sep {
    width: 4px;
    height: 32px;
    margin: 18px 0 0 17px;
    border-radius: 2px;
    background: #32323c;
}
.avatar {
    width: 40px;
    height: 40px;
    margin: 14px 0 0 32px;
    border-radius: 50%;
    background: #8b6e62;
    text-align: center;
    line-height: 40px;
    font-size: 22px;
}
.kebab {
    width: 8px;
    height: 32px;
    margin: 18px 0 0 48px;
    fill: #fff;
}
.bookmarks {
    height: 82px;
    display: flex;
    align-items: center;
    gap: 32px;
    padding: 12px 29px 0 25px;
    background: #4f4e5c;
    border-bottom: 2px solid #68687a;
}
.bm {
    display: flex;
    align-items: center;
    font-size: 25px;
    white-space: nowrap;
}
.bm-ms {
    gap: 11px;
    margin-right: 4px;
}
.bm-folder {
    gap: 16px;
    margin-right: 2px;
}
.bm-look {
    margin-left: 4px;
    font-size: 25.7px;
}
.bm-in {
    width: 28px;
    height: 28px;
    margin: 0 2px;
    background: #2867b2;
    font: bold 25px 'Liberation Sans', sans-serif;
    text-align: center;
    line-height: 30px;
}
.bm-guardian {
    width: 32px;
    height: 32px;
    border-radius: 50%;
    background: #0d2a5c;
    color: #fff;
    font: bold 26px/32px 'Liberation Serif', serif;
    text-align: center;
}
.bm-tile {
    width: 32px;
    height: 32px;
    background: #fff;
    border-radius: 4px;
    color: #000;
    display: block;
    text-align: center;
}
.bm-amazon {
    font: bold 26px/24px 'Liberation Sans', sans-serif;
}
.bm-amazon svg {
    width: 26px;
    height: 8px;
    display: block;
    margin: 0 auto;
}
.bm-wiki {
    font: 26px/32px 'Liberation Serif', serif;
}
.bm-end {
    margin-left: auto;
    display: flex;
    align-items: center;
}
.bm-more {
    width: 22px;
    height: 18px;
    fill: none;
    stroke: #fff;
    stroke-width: 2.6;
}
.bm-sep {
    width: 4px;
    height: 32px;
    margin: 0 32px 0 31px;
    border-radius: 2px;
    background: #32323c;
}
.bm-end .bm-folder {
    margin-right: 0;
}

/* Console frame */
.window {
    flex: 1;
    display: flex;
    min-height: 0;
}
.console {
    width: 1994px;
    display: flex;
    flex-direction: column;
}
.scrollbar {
    width: 30px;
    background: #fafafa;
    border-left: 1px solid #e8e8e8;
    padding: 36px 0 13px 7px;
}
.thumb {
    display: block;
    width: 16px;
    height: 100%;
    border-radius: 8px;
    background: #bdbdbd;
}

/* AWS header */
.aws-header {
    height: 111px;
    flex: none;
    background: #283242;
    color: #fff;
    font-size: 20px;
}
.aws-top {
    height: 68px;
    padding: 8px 0 0 28px;
    display: flex;
    align-items: flex-start;
}
.aws-logo {
    width: 52px;
    height: 48px;
    margin-top: 6px;
}
.aws-logo span {
    display: block;
    font-size: 29px;
    line-height: 24px;
    text-align: center;
    letter-spacing: -1px;
}
.aws-logo svg {
    display: block;
    width: 52px;
    height: 12px;
}
.services {
    height: 36px;
    margin: 6px 0 0 26px;
    padding-left: 27px;
    border-left: 1px solid #414d5c;
    display: flex;
    align-items: center;
    gap: 13px;
    font-size: 18.7px;
}
.services svg {
    width: 25px;
    height: 24px;
    fill: #fff;
}
.search-box {
    width: 864px;
    height: 48px;
    margin-left: 26px;
    padding: 0 17px 0 18px;
    border: 1px solid #87919c;
    border-radius: 3px;
    background: #16191f;
    display: flex;
    align-items: center;
    font-size: 22px;
}
.search-box svg {
    width: 24px;
    height: 24px;
    fill: none;
    stroke: #eaeded;
    stroke-width: 2.4;
}
.search-label {
    margin-left: 13px;
    font-style: italic;
    color: #8d99a8;
}
.search-key {
    margin-left: auto;
    color: #8d99a8;
}
.aws-actions {
    flex: 1;
    height: 36px;
    margin-top: 6px;
    display: flex;
}
.aws-action {
    width: 79px;
    height: 36px;
    display: flex;
    align-items: center;
    justify-content: center;
    border-right: 1px solid #414d5c;
}
.aws-action:first-child {
    width: 246px;
    justify-content: flex-start;
    padding-left: 193px;
}
.aws-action svg {
    width: 26px;
    height: 26px;
}
.aws-menu {
    display: flex;
    align-items: center;
    gap: 10px;
    font-size: 18.7px;
    white-space: nowrap;
}
.aws-region {
    width: 170px;
    padding-left: 26px;
    border-right: 1px solid #414d5c;
}
.aws-user {
    padding-left: 27px;
}
.caret {
    width: 0;
    height: 0;
    border: 7px solid transparent;
    border-top: 11px solid #fff;
    border-bottom: 0;
}
.aws-fav {
    height: 43px;
    padding-left: 30px;
    display: flex;
    gap: 28.5px;
}
.svc {
    display: flex;
    align-items: flex-start;
    gap: 8px;
    font-size: 18.5px;
    line-height: 39px;
    white-space: nowrap;
}
.svc-icon {
    width: 38px;
    height: 39px;
    flex: none;
}
.svc-icon svg {
    display: block;
    width: 38px;
    height: 39px;
    fill: none;
    stroke: #fff;
    stroke-width: 1.3;
}
.pink {
    background: linear-gradient(to bottom, #f0609a, #a9205c);
}
.purple {
    background: linear-gradient(to bottom, #8f60ea, #4d2aa8);
}
.slate {
    background: linear-gradient(to bottom, #50555e, #1e2228);
}
.green {
    background: linear-gradient(to bottom, #7aaa46, #3c7a1e);
}
.blue {
    background: linear-gradient(to bottom, #4f74f2, #2e28ad);
}
.orange {
    background: linear-gradient(to bottom, #f69c35, #c9541c);
}

/* Page body */
.page {
    flex: 1;
    display: flex;
    min-height: 0;
    background: #f2f3f3;
}
.side-left {
    width: 64px;
    flex: none;
    padding: 22px 0 0 20px;
    background: #fff linear-gradient(#c6c6cd, #c6c6cd) right top / 1px calc(100% - 24px) no-repeat;
}
.ham {
    display: block;
    width: 24px;
    height: 21px;
    border-top: 3px solid #545b64;
    border-bottom: 3px solid #545b64;
    position: relative;
}
.ham::after {
    content: "";
    position: absolute;
    left: 0;
    right: 0;
    top: 6px;
    height: 3px;
    background: #545b64;
}
.side-right {
    width: 64px;
    flex: none;
    background: #fff linear-gradient(#c6c6cd, #c6c6cd) left top / 1px calc(100% - 24px) no-repeat;
}
.side-tool {
    height: 65px;
    display: flex;
    align-items: center;
    justify-content: center;
    border-bottom: 1px solid #e5e7e7;
}
.side-tool + .side-tool {
    border: none;
}
.side-tool svg {
    width: 26px;
    height: 26px;
    fill: none;
    stroke: #545b64;
    stroke-width: 2.6;
}
.content {
    flex: 1;
    min-width: 0;
    position: relative;
}
.flash {
    height: 47px;
    padding-left: 20px;
    background: #41801f;
    color: #fff;
    display: flex;
    align-items: flex-start;
    gap: 12px;
    box-shadow: 0 2px 3px rgba(0, 0, 0, 0.25);
    position: relative;
    z-index: 3;
}
.flash p {
    margin: 0;
    font-size: 21.65px;
    line-height: 18px;
    white-space: nowrap;
}
.flash b {
    font-size: 20.9px;
}
.flash-check {
    width: 24px;
    height: 24px;
    flex: none;
    fill: none;
    stroke: #fff;
    stroke-width: 2.6;
}
.flash-close {
    position: absolute;
    top: 0;
    right: 29px;
    width: 20px;
    height: 20px;
    stroke: #dfe8d8;
    stroke-width: 2.6;
}
.flash-layer {
    background: #41801f;
    box-shadow: 0 2px 3px rgba(0, 0, 0, 0.25);
    position: relative;
}
.flash-layer.one {
    height: 13px;
    margin: 0 16px;
    z-index: 2;
}
.flash-layer.two {
    height: 12px;
    margin: 0 32px;
    z-index: 1;
}
.axe-bar {
    position: absolute;
    top: 29px;
    left: 722px;
    width: 422px;
    height: 51px;
    padding: 0 0 0 20px;
    border-radius: 3px;
    background: #2b2e35;
    box-shadow: 0 2px 3px rgba(0, 0, 0, 0.4);
    color: #fff;
    font: 23px 'DejaVu Sans', sans-serif;
    display: flex;
    align-items: center;
    z-index: 5;
}
.axe-bar svg {
    width: 26px;
    height: 26px;
    fill: none;
    stroke: #fff;
    stroke-width: 2.8;
    flex: none;
}
.axe-bar span {
    width: 38.7px;
    padding-left: 6px;
}
.axe-bar .axe-chevron {
    width: 26px;
    height: 16px;
    margin-left: 23px;
}
.stage-page {
    padding: 43px 63px 0 64px;
}
.crumbs {
    height: 32px;
    display: flex;
    align-items: center;
    gap: 18.5px;
    font-size: 21.7px;
}
.crumbs a {
    color: #2b6fb8;
    border-bottom: 2px solid #2b6fb8;
    line-height: 30px;
}
.crumbs svg {
    width: 14px;
    height: 26px;
    fill: none;
    stroke: #6f7680;
    stroke-width: 2.5;
}
.crumbs span {
    padding-bottom: 3px;
    font-weight: 700;
    color: #5f6b7a;
}
.title-row {
    height: 50px;
    margin-top: 46px;
    display: flex;
    align-items: center;
    justify-content: space-between;
}
h1 {
    margin: -5px 0 0;
    font-size: 43px;
    font-weight: 400;
    color: #16191f;
}
.title-btns {
    display: flex;
    gap: 19px;
}
.btn {
    height: 50px;
    padding: 0;
    border-radius: 2px;
    font-family: inherit;
    font-size: 21.4px;
    font-weight: 700;
    letter-spacing: 0.2px;
}
.btn-normal {
    border: 1.5px solid #545b64;
    background: #fff;
    color: #545b64;
}
.btn-actions {
    width: 245px;
    display: flex;
    align-items: center;
    justify-content: center;
    gap: 18px;
}
.caret-lg {
    width: 0;
    height: 0;
    border: 8px solid transparent;
    border-top: 13px solid #545b64;
    border-bottom: 0;
}
.btn-primary {
    width: 201px;
    border: none;
    background: #f2a038;
    color: #16191f;
}
.split {
    height: 1422px;
    margin-top: 38px;
    display: flex;
    gap: 32px;
    align-items: flex-start;
}
.tree {
    width: 448px;
    height: 1419px;
    margin-top: 2px;
    padding-top: 37px;
    background: #fff;
    box-shadow: 0 1px 2px rgba(84, 91, 100, 0.7), 0 0 1px rgba(84, 91, 100, 0.5);
    position: relative;
    font-size: 21.3px;
    font-weight: 700;
    color: #16191f;
}
.tree-row {
    height: 48px;
    display: flex;
    align-items: center;
    gap: 15px;
}
.tree-row svg {
    width: 23px;
    height: 23px;
    flex: none;
}
.lvl-0 {
    padding-left: 39px;
}
.lvl-1 {
    padding-left: 78px;
}
.lvl-2 {
    padding-left: 117px;
}
.tree-post {
    height: 44px;
    margin-top: 3px;
    padding-left: 154px;
    border-top: 1px solid #2b6fb8;
    border-bottom: 1px solid #2b6fb8;
    background: #f1faff;
    color: #3a7a1e;
    font-size: 22.4px;
    line-height: 40px;
}
.resize-cursor {
    position: absolute;
    left: 432px;
    top: 739px;
    display: flex;
    align-items: center;
    gap: 3px;
}
.resize-cursor i {
    display: block;
    width: 3px;
    height: 11px;
    background: #16191f;
}
.resize-cursor i + i {
    height: 24px;
}
.card {
    width: 1259px;
    height: 1422px;
    border: 2px solid #2d63c8;
    border-radius: 4px;
    background: #f2f3f3;
}
.card-inner {
    background: #fff;
    border-bottom: 1px solid #7d8998;
    box-shadow: 0 1px 2px rgba(0, 0, 0, 0.2);
}
.card-head {
    height: 140px;
    padding: 25px 31px 0 30px;
    background: #fafafa;
    border-bottom: 1px solid #eaeded;
}
.card-title {
    display: flex;
    align-items: center;
    justify-content: space-between;
}
h2 {
    margin: -2px 0 0;
    font-size: 26.9px;
    font-weight: 700;
    color: #16191f;
}
.btn-edit {
    width: 109px;
    height: 49px;
}
.card-head p {
    margin: 6px 0 0;
    font-size: 18.56px;
    line-height: 30px;
    color: #545b64;
    white-space: nowrap;
}
.card-info {
    height: 151px;
    padding: 26px 31px 0 30px;
    border-bottom: 1px solid #eaeded;
}
.info-box {
    height: 92px;
    padding-left: 31px;
    border: 1.5px solid #2b6fb8;
    border-radius: 2px;
    background: #f1faff;
    display: flex;
    align-items: center;
    gap: 14px;
    font-size: 21.6px;
    color: #16191f;
}
.info-box svg {
    width: 26px;
    height: 26px;
    fill: none;
    stroke: #2b6fb8;
    stroke-width: 2.6;
}
.card-url {
    height: 112px;
    padding: 22px 30px 0;
}
.url-label {
    font-size: 21.5px;
    line-height: 30px;
    color: #545b64;
}
.url-value {
    margin-top: 8px;
    padding-left: 7px;
    display: flex;
    align-items: center;
    gap: 9px;
    font-size: 21.9px;
    line-height: 30px;
    color: #16191f;
}
.url-value svg {
    width: 22px;
    height: 24px;
    fill: #fff;
    stroke: #545b64;
    stroke-width: 2.6;
}

/* Footer */
.aws-footer {
    height: 48px;
    flex: none;
    padding: 0 25px 0 26px;
    background: #283242;
    border-top: 1px solid #414d5c;
    color: #fff;
    font-size: 18.7px;
    display: flex;
    align-items: center;
    justify-content: space-between;
    white-space: nowrap;
}
.foot-left,
.foot-right {
    display: flex;
    align-items: center;
    gap: 40px;
}
.foot-copy {
    margin-right: 8px;
}
.foot-cookie {
    font-size: 18.4px;
}
.foot-shell {
    display: flex;
    align-items: center;
    gap: 9px;
}
.foot-shell svg {
    width: 24px;
    height: 25px;
}
```
